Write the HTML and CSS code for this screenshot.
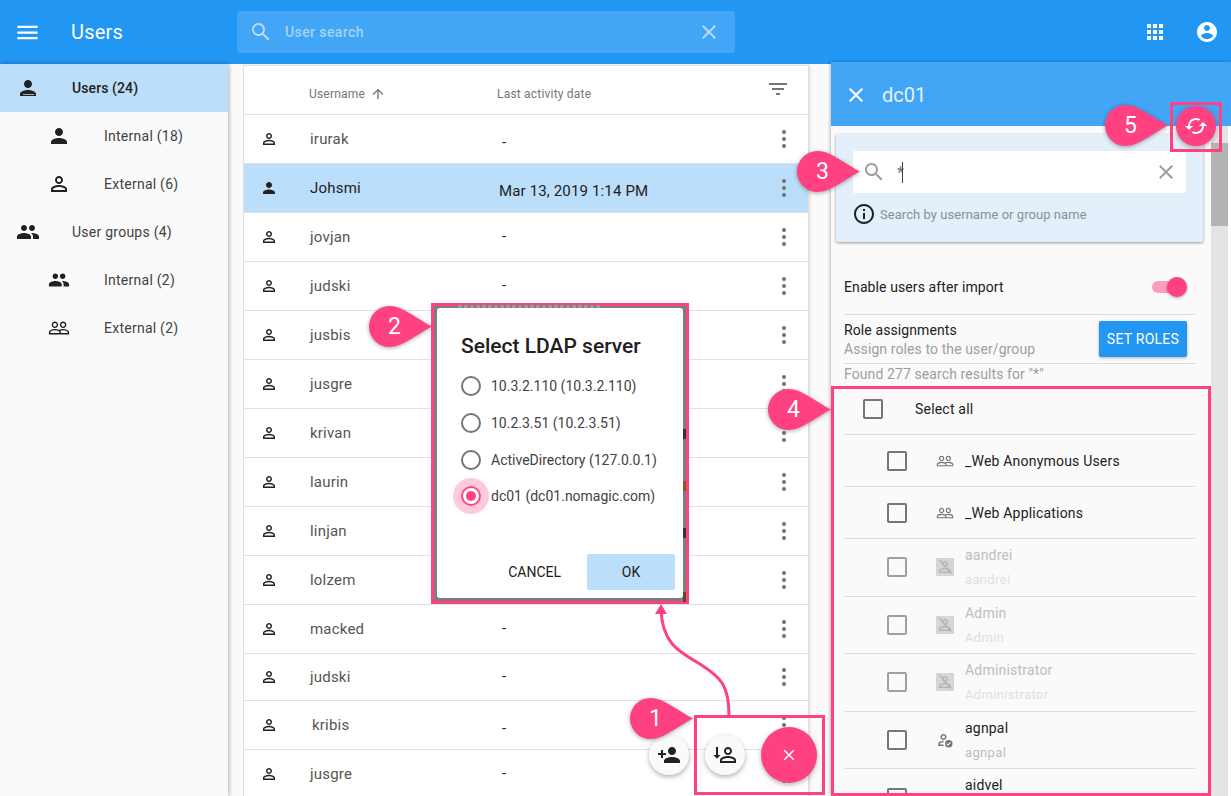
FILE: index.html
```html
<!DOCTYPE html>
<html lang="en">
  <head>
    <meta charset="UTF-8" />
    <title>Users</title>
    <link rel="stylesheet" href="styles.css">
  </head>
  <body>
    <svg class="sprite" xmlns="http://www.w3.org/2000/svg">
      <symbol id="i-menu" viewBox="0 0 24 24"><path d="M3 18h18v-2H3v2zm0-5h18v-2H3v2zm0-7v2h18V6H3z"/></symbol>
      <symbol id="i-search" viewBox="0 0 24 24"><path d="M15.5 14h-.79l-.28-.27C15.41 12.59 16 11.11 16 9.5 16 5.91 13.09 3 9.5 3S3 5.91 3 9.5 5.91 16 9.5 16c1.61 0 3.09-.59 4.23-1.57l.27.28v.79l5 4.99L20.49 19l-4.99-5zm-6 0C7.01 14 5 11.99 5 9.5S7.01 5 9.5 5 14 7.01 14 9.5 11.99 14 9.5 14z"/></symbol>
      <symbol id="i-close" viewBox="0 0 24 24"><path d="M19 6.41L17.59 5 12 10.59 6.41 5 5 6.41 10.59 12 5 17.59 6.41 19 12 13.41 17.59 19 19 17.59 13.41 12z"/></symbol>
      <symbol id="i-apps" viewBox="0 0 24 24"><path d="M4 8h4V4H4v4zm6 12h4v-4h-4v4zm-6 0h4v-4H4v4zm0-6h4v-4H4v4zm6 0h4v-4h-4v4zm6-10v4h4V4h-4zm-6 4h4V4h-4v4zm6 6h4v-4h-4v4zm0 6h4v-4h-4v4z"/></symbol>
      <symbol id="i-account" viewBox="0 0 24 24"><path d="M12 2C6.48 2 2 6.48 2 12s4.48 10 10 10 10-4.48 10-10S17.52 2 12 2zm0 3c1.66 0 3 1.34 3 3s-1.34 3-3 3-3-1.34-3-3 1.34-3 3-3zm0 14.2c-2.5 0-4.71-1.28-6-3.22.03-1.99 4-3.08 6-3.08 1.99 0 5.97 1.09 6 3.08-1.29 1.94-3.5 3.22-6 3.22z"/></symbol>
      <symbol id="i-person" viewBox="0 0 24 24"><path d="M12 12c2.21 0 4-1.79 4-4s-1.79-4-4-4-4 1.79-4 4 1.79 4 4 4zm0 2c-2.67 0-8 1.34-8 4v2h16v-2c0-2.66-5.33-4-8-4z"/></symbol>
      <symbol id="i-person-line" viewBox="0 0 24 24"><path d="M12 5.9c1.16 0 2.1.94 2.1 2.1s-.94 2.1-2.1 2.1S9.9 9.16 9.9 8s.94-2.1 2.1-2.1m0 9c2.97 0 6.1 1.46 6.1 2.1v1.1H5.9V17c0-.64 3.13-2.1 6.1-2.1M12 4C9.79 4 8 5.79 8 8s1.79 4 4 4 4-1.79 4-4-1.79-4-4-4zm0 9c-2.67 0-8 1.34-8 4v3h16v-3c0-2.66-5.33-4-8-4z"/></symbol>
      <symbol id="i-person-cut" viewBox="0 0 24 24"><path d="M12 12c2.21 0 4-1.79 4-4s-1.79-4-4-4-4 1.79-4 4 1.79 4 4 4zm0 2c-2.67 0-8 1.34-8 4v2h16v-2c0-2.66-5.33-4-8-4z"/><path fill="#bbdefb" d="M7 18h11v.8H7z"/></symbol>
      <symbol id="i-people" viewBox="0 0 24 24"><path d="M16 11c1.66 0 2.99-1.34 2.99-3S17.66 5 16 5c-1.66 0-3 1.34-3 3s1.34 3 3 3zm-8 0c1.66 0 2.99-1.34 2.99-3S9.66 5 8 5C6.34 5 5 6.34 5 8s1.34 3 3 3zm0 2c-2.33 0-7 1.17-7 3.5V19h14v-2.5c0-2.33-4.67-3.5-7-3.5zm8 0c-.29 0-.62.02-.97.05 1.16.84 1.97 1.97 1.97 3.45V19h6v-2.5c0-2.33-4.67-3.5-7-3.5z"/></symbol>
      <symbol id="i-people-line" viewBox="0 0 24 24"><path d="M16.5 13c-1.2 0-3.07.34-4.5 1-1.43-.67-3.3-1-4.5-1C5.33 13 1 14.08 1 16.25V19h22v-2.75c0-2.17-4.33-3.25-6.5-3.25zm-4 4.5h-10v-1.25c0-.54 2.56-1.75 5-1.75s5 1.21 5 1.75v1.25zm9 0H14v-1.25c0-.46-.2-.86-.52-1.22.88-.3 1.96-.53 3.02-.53 2.44 0 5 1.21 5 1.75v1.25zM7.5 12c1.93 0 3.5-1.57 3.5-3.5S9.43 5 7.5 5 4 6.57 4 8.5 5.57 12 7.5 12zm0-5.5c1.1 0 2 .9 2 2s-.9 2-2 2-2-.9-2-2 .9-2 2-2zm9 5.5c1.93 0 3.5-1.57 3.5-3.5S18.43 5 16.5 5 13 6.57 13 8.5s1.57 3.5 3.5 3.5zm0-5.5c1.1 0 2 .9 2 2s-.9 2-2 2-2-.9-2-2 .9-2 2-2z"/></symbol>
      <symbol id="i-arrow-up" viewBox="0 0 24 24"><path d="M4 12l1.41 1.41L11 7.83V20h2V7.83l5.58 5.59L20 12l-8-8-8 8z"/></symbol>
      <symbol id="i-filter" viewBox="0 0 24 24"><path d="M10 18h4v-2h-4v2zM3 6v2h18V6H3zm3 7h12v-2H6v2z"/></symbol>
      <symbol id="i-more" viewBox="0 0 24 24"><circle cx="12" cy="6" r="1.8"/><circle cx="12" cy="12" r="1.8"/><circle cx="12" cy="18" r="1.8"/></symbol>
      <symbol id="i-sync" viewBox="0 0 24 24"><path transform="rotate(90 12 12)" d="M12 4V1L8 5l4 4V6c3.31 0 6 2.69 6 6 0 1.01-.25 1.97-.7 2.8l1.46 1.46C19.54 15.03 20 13.57 20 12c0-4.42-3.58-8-8-8zm0 14c-3.31 0-6-2.69-6-6 0-1.01.25-1.97.7-2.8L5.24 7.74C4.46 8.97 4 10.43 4 12c0 4.42 3.58 8 8 8v3l4-4-4-4v3z"/></symbol>
      <symbol id="i-info" viewBox="0 0 24 24"><path d="M11 7h2v2h-2zm0 4h2v6h-2zm1-9C6.48 2 2 6.48 2 12s4.48 10 10 10 10-4.48 10-10S17.52 2 12 2zm0 18c-4.41 0-8-3.59-8-8s3.59-8 8-8 8 3.59 8 8-3.59 8-8 8z"/></symbol>
      <symbol id="i-person-add" viewBox="0 0 24 24"><path d="M15 12c2.21 0 4-1.79 4-4s-1.79-4-4-4-4 1.79-4 4 1.79 4 4 4zm-9-2V7H4v3H1v2h3v3h2v-3h3v-2H6zm9 4c-2.67 0-8 1.34-8 4v2h16v-2c0-2.66-5.33-4-8-4z"/></symbol>
      <symbol id="i-person-import" viewBox="0 0 24 24"><path d="M15 5.9c1.16 0 2.1.94 2.1 2.1s-.94 2.1-2.1 2.1-2.1-.94-2.1-2.1.94-2.1 2.1-2.1m0 9c2.97 0 6.1 1.46 6.1 2.1v1.1H8.9V17c0-.64 3.13-2.1 6.1-2.1M15 4c-2.21 0-4 1.79-4 4s1.79 4 4 4 4-1.79 4-4-1.79-4-4-4zm0 9c-2.67 0-8 1.34-8 4v3h16v-3c0-2.66-5.33-4-8-4z"/><path d="M3 4h2v8h2.5L4 15.8.5 12H3z"/></symbol>
      <symbol id="i-person-off" viewBox="0 0 24 24"><path d="M12 5.9c1.16 0 2.1.94 2.1 2.1s-.94 2.1-2.1 2.1S9.9 9.16 9.9 8s.94-2.1 2.1-2.1m0 9c2.97 0 6.1 1.46 6.1 2.1v1.1H5.9V17c0-.64 3.13-2.1 6.1-2.1M12 4C9.79 4 8 5.79 8 8s1.79 4 4 4 4-1.79 4-4-1.79-4-4-4zm0 9c-2.67 0-8 1.34-8 4v3h16v-3c0-2.66-5.33-4-8-4z"/><path d="M3.6 3.1l1.5-1.5 16 18.3-1.5 1.5z"/></symbol>
      <symbol id="i-person-ok" viewBox="0 0 24 24"><path d="M10 5.9c1.16 0 2.1.94 2.1 2.1s-.94 2.1-2.1 2.1S7.9 9.16 7.9 8s.94-2.1 2.1-2.1M10 4C7.79 4 6 5.79 6 8s1.79 4 4 4 4-1.79 4-4-1.79-4-4-4zm0 9c-2.67 0-7 1.34-7 4v3h7v-1.9H4.9V17c0-.64 2.6-2.1 5.1-2.1z"/><path d="M17 12a5 5 0 1 0 0 10 5 5 0 0 0 0-10zm-1 7.6l-2.4-2.4 1-1 1.4 1.4 3-3 1 1z"/></symbol>
      <symbol id="drop" viewBox="0 0 63 41"><path d="M20.5 0C33 0 45 11 63 20.5 45 30 33 41 20.5 41a20.5 20.5 0 0 1 0-41z"/></symbol>
    </svg>

    <header class="app-bar">
      <svg class="icon menu-icon"><use href="#i-menu"/></svg>
      <h1 class="app-title">Users</h1>
      <div class="app-search">
        <svg class="icon app-search-icon"><use href="#i-search"/></svg>
        <span class="app-search-text">User search</span>
        <svg class="icon app-search-clear"><use href="#i-close"/></svg>
      </div>
      <svg class="icon app-action apps-icon"><use href="#i-apps"/></svg>
      <svg class="icon app-action account-icon"><use href="#i-account"/></svg>
    </header>

    <div class="layout">
      <nav class="sidebar">
        <div class="nav-item selected"><span class="nav-icon"><svg class="icon s24"><use href="#i-person-cut"/></svg></span>Users (24)</div>
        <div class="nav-item nested"><span class="nav-icon"><svg class="icon s24"><use href="#i-person"/></svg></span>Internal (18)</div>
        <div class="nav-item nested"><span class="nav-icon"><svg class="icon s24"><use href="#i-person-line"/></svg></span>External (6)</div>
        <div class="nav-item"><span class="nav-icon"><svg class="icon s24"><use href="#i-people"/></svg></span>User groups (4)</div>
        <div class="nav-item nested"><span class="nav-icon"><svg class="icon s22"><use href="#i-people"/></svg></span>Internal (2)</div>
        <div class="nav-item nested"><span class="nav-icon"><svg class="icon s22"><use href="#i-people-line"/></svg></span>External (2)</div>
      </nav>

      <main class="content">
        <div class="table">
          <div class="table-head">
            <span class="col-name">Username <svg class="icon sort-icon"><use href="#i-arrow-up"/></svg></span>
            <span class="col-date">Last activity date</span>
            <svg class="icon filter-icon"><use href="#i-filter"/></svg>
          </div>
          <div class="row"><svg class="icon user-icon"><use href="#i-person-line"/></svg><span class="name">irurak</span><span class="date dash low">-</span><svg class="icon more"><use href="#i-more"/></svg></div>
          <div class="row selected"><svg class="icon user-icon"><use href="#i-person"/></svg><span class="name">Johsmi</span><span class="date low">Mar 13, 2019 1:14 PM</span><svg class="icon more"><use href="#i-more"/></svg></div>
          <div class="row"><svg class="icon user-icon"><use href="#i-person-line"/></svg><span class="name">jovjan</span><span class="date dash">-</span><svg class="icon more"><use href="#i-more"/></svg></div>
          <div class="row"><svg class="icon user-icon"><use href="#i-person-line"/></svg><span class="name">judski</span><span class="date dash">-</span><svg class="icon more"><use href="#i-more"/></svg></div>
          <div class="row"><svg class="icon user-icon"><use href="#i-person-line"/></svg><span class="name">jusbis</span><span class="date"></span><svg class="icon more"><use href="#i-more"/></svg></div>
          <div class="row"><svg class="icon user-icon"><use href="#i-person-line"/></svg><span class="name">jusgre</span><span class="date"></span><svg class="icon more"><use href="#i-more"/></svg></div>
          <div class="row"><svg class="icon user-icon"><use href="#i-person-line"/></svg><span class="name">krivan</span><span class="date"></span><svg class="icon more"><use href="#i-more"/></svg></div>
          <div class="row"><svg class="icon user-icon"><use href="#i-person-line"/></svg><span class="name">laurin</span><span class="date"></span><svg class="icon more"><use href="#i-more"/></svg></div>
          <div class="row"><svg class="icon user-icon"><use href="#i-person-line"/></svg><span class="name">linjan</span><span class="date"></span><svg class="icon more"><use href="#i-more"/></svg></div>
          <div class="row"><svg class="icon user-icon"><use href="#i-person-line"/></svg><span class="name">lolzem</span><span class="date"></span><svg class="icon more"><use href="#i-more"/></svg></div>
          <div class="row"><svg class="icon user-icon"><use href="#i-person-line"/></svg><span class="name">macked</span><span class="date dash">-</span><svg class="icon more"><use href="#i-more"/></svg></div>
          <div class="row short"><svg class="icon user-icon"><use href="#i-person-line"/></svg><span class="name">judski</span><span class="date dash">-</span><svg class="icon more"><use href="#i-more"/></svg></div>
          <div class="row"><svg class="icon user-icon"><use href="#i-person-line"/></svg><span class="name shifted">kribis</span><span class="date dash low">-</span><svg class="icon more"><use href="#i-more"/></svg></div>
          <div class="row"><svg class="icon user-icon"><use href="#i-person-line"/></svg><span class="name">jusgre</span><span class="date dash">-</span><svg class="icon more"><use href="#i-more"/></svg></div>
        </div>
      </main>

      <aside class="panel">
        <div class="panel-header">
          <svg class="icon panel-close"><use href="#i-close"/></svg>
          <span class="panel-title">dc01</span>
        </div>
        <div class="panel-body">
          <div class="panel-main">
            <div class="search-card">
              <div class="search-input">
                <svg class="icon search-icon"><use href="#i-search"/></svg>
                <span class="search-value">*</span>
                <span class="caret"></span>
                <svg class="icon search-clear"><use href="#i-close"/></svg>
              </div>
              <div class="search-hint">
                <svg class="icon s24"><use href="#i-info"/></svg>
                <span>Search by username or group name</span>
              </div>
            </div>

            <div class="settings">
              <div class="setting-row enable-row">
                <span>Enable users after import</span>
                <span class="toggle"><span class="toggle-thumb"></span></span>
              </div>
              <div class="setting-row role-row">
                <div class="role-text">
                  <div>Role assignments</div>
                  <div class="muted">Assign roles to the user/group</div>
                </div>
                <button class="set-roles">SET ROLES</button>
              </div>
              <div class="found muted">Found 277 search results for "*"</div>
            </div>

            <div class="results">
              <div class="result select-all"><span class="checkbox"></span><span class="select-all-label">Select all</span></div>
              <div class="result group">
                <span class="checkbox"></span>
                <span class="result-icon"><svg class="icon s18 icon-grey"><use href="#i-people-line"/></svg></span>
                <span class="result-name">_Web Anonymous Users</span>
              </div>
              <div class="result group">
                <span class="checkbox"></span>
                <span class="result-icon"><svg class="icon s18 icon-grey"><use href="#i-people-line"/></svg></span>
                <span class="result-name">_Web Applications</span>
              </div>
              <div class="result user disabled">
                <span class="checkbox"></span>
                <span class="result-icon boxed"><svg class="icon s18"><use href="#i-person-off"/></svg></span>
                <div class="result-text"><div class="result-name">aandrei</div><div class="result-sub">aandrei</div></div>
              </div>
              <div class="result user disabled">
                <span class="checkbox"></span>
                <span class="result-icon boxed"><svg class="icon s18"><use href="#i-person-off"/></svg></span>
                <div class="result-text"><div class="result-name">Admin</div><div class="result-sub">Admin</div></div>
              </div>
              <div class="result user disabled">
                <span class="checkbox"></span>
                <span class="result-icon boxed"><svg class="icon s18"><use href="#i-person-off"/></svg></span>
                <div class="result-text"><div class="result-name">Administrator</div><div class="result-sub">Administrator</div></div>
              </div>
              <div class="result user">
                <span class="checkbox"></span>
                <span class="result-icon"><svg class="icon s18 icon-grey"><use href="#i-person-ok"/></svg></span>
                <div class="result-text"><div class="result-name">agnpal</div><div class="result-sub">agnpal</div></div>
              </div>
              <div class="result user">
                <span class="checkbox"></span>
                <span class="result-icon"></span>
                <div class="result-text"><div class="result-name">aidvel</div></div>
              </div>
            </div>
          </div>
          <div class="scrollbar">
            <span class="scroll-thumb"></span>
          </div>
        </div>
      </aside>
    </div>

    <!-- dialog, shown inside its highlight frame -->
    <div class="frame frame-dialog">
      <span class="ghost-text"></span>
      <span class="peek peek-1"></span>
      <span class="peek peek-2"></span>
      <span class="peek peek-3"></span>
      <span class="peek peek-4"></span>
      <div class="dialog">
        <h2 class="dialog-title">Select LDAP server</h2>
        <div class="radio-row"><span class="radio"></span>10.3.2.110 (10.3.2.110)</div>
        <div class="radio-row"><span class="radio"></span>10.2.3.51 (10.2.3.51)</div>
        <div class="radio-row"><span class="radio"></span>ActiveDirectory (127.0.0.1)</div>
        <div class="radio-row"><span class="radio checked"></span>dc01 (dc01.nomagic.com)</div>
        <div class="dialog-actions">
          <button class="btn-cancel">CANCEL</button>
          <button class="btn-ok">OK</button>
        </div>
      </div>
    </div>

    <!-- floating buttons -->
    <button class="fab fab-small fab-add"><svg class="icon s24"><use href="#i-person-add"/></svg></button>
    <button class="fab fab-small fab-import"><svg class="icon s24"><use href="#i-person-import"/></svg></button>
    <button class="fab fab-main"><svg class="icon s18"><use href="#i-close"/></svg></button>
    <button class="fab fab-sync"><svg class="icon s24"><use href="#i-sync"/></svg></button>

    <!-- annotations on top of the screenshot -->
    <div class="frame frame-fab"></div>
    <div class="frame frame-list"></div>
    <div class="frame frame-sync"></div>

    <svg class="arrow" viewBox="0 0 100 120">
      <path d="M79 112C79 82 72 74 50 60 27 47 12 38 11 5" fill="none" stroke="#ff4081" stroke-width="3"/>
      <path d="M11 0l6 10H5z" fill="#ff4081"/>
    </svg>

    <div class="callout callout-1"><svg viewBox="0 0 63 41"><use href="#drop"/></svg><span>1</span></div>
    <div class="callout callout-2"><svg viewBox="0 0 63 41"><use href="#drop"/></svg><span>2</span></div>
    <div class="callout callout-3"><svg viewBox="0 0 63 41"><use href="#drop"/></svg><span>3</span></div>
    <div class="callout callout-4"><svg viewBox="0 0 63 41"><use href="#drop"/></svg><span>4</span></div>
    <div class="callout callout-5"><svg viewBox="0 0 63 41"><use href="#drop"/></svg><span>5</span></div>
  </body>
</html>
```

FILE: styles.css
```css
* {
  box-sizing: border-box;
}
html,
body {
  margin: 0;
  height: 796px;
  overflow: hidden;
}
body {
  position: relative;
  font-family: Roboto, "Liberation Sans", sans-serif;
  font-size: 14px;
  color: #212121;
  background: #fafafa;
}
button {
  font-family: inherit;
  border: none;
  cursor: pointer;
}
.sprite {
  position: absolute;
  width: 0;
  height: 0;
}
.icon {
  display: block;
  flex: none;
  width: 24px;
  height: 24px;
  fill: currentColor;
}
.s24 {
  width: 24px;
  height: 24px;
}
.s22 {
  width: 22px;
  height: 22px;
}
.s18 {
  width: 18px;
  height: 18px;
}
.icon-grey {
  color: #757575;
}

/* app bar */
.app-bar {
  display: flex;
  align-items: center;
  height: 64px;
  background: #2196f3;
  color: #fff;
  padding-left: 14px;
}
.menu-icon {
  width: 27px;
  height: 27px;
}
.app-title {
  margin: 0 0 0 30px;
  width: 166px;
  font-size: 20px;
  font-weight: 400;
  letter-spacing: 0.2px;
}
.app-search {
  display: flex;
  align-items: center;
  width: 498px;
  height: 42px;
  padding: 0 14px 0 12px;
  background: #42a5f5;
  border-radius: 3px;
  color: #b5dcfb;
}
.app-search-text {
  flex: 1;
  margin-left: 12px;
  font-size: 14px;
  font-weight: 500;
  letter-spacing: 0.4px;
  color: #a5d4fa;
}
.apps-icon {
  margin-left: 408px;
}
.account-icon {
  margin-left: 28px;
}

/* main layout */
.layout {
  display: flex;
  height: 732px;
}
.sidebar {
  width: 228px;
  flex: none;
  background: #fafafa;
  box-shadow: 1px 0 4px rgba(0, 0, 0, 0.3);
  letter-spacing: 0.25px;
}
.nav-item {
  display: flex;
  align-items: center;
  height: 48px;
  color: #424242;
}
.nav-item.selected {
  background: #bbdefb;
  color: #212121;
  font-weight: 500;
  letter-spacing: 0.1px;
}
.nav-icon {
  display: flex;
  justify-content: center;
  width: 56px;
  margin-right: 16px;
  color: #212121;
}
.nav-item.nested {
  padding-left: 31px;
  padding-right: 0;
}
.nav-item.nested .nav-icon {
  margin-right: 17px;
}

/* users table */
.content {
  width: 603px;
  flex: none;
  padding: 1px 22px 0 15px;
}
.table {
  background: #fff;
  border: 1px solid #e0e0e0;
  border-bottom: none;
  box-shadow: 1px 0 2px rgba(0, 0, 0, 0.12);
}
.table-head {
  display: flex;
  align-items: center;
  height: 49px;
  padding-top: 7px;
  padding-left: 65px;
  border-bottom: 1px solid #e0e0e0;
  font-size: 12px;
  letter-spacing: 0.2px;
  color: #757575;
}
.col-name {
  display: flex;
  align-items: center;
  gap: 5px;
  width: 188px;
}
.col-date {
  flex: 1;
}
.sort-icon {
  width: 16px;
  height: 16px;
}
.filter-icon {
  margin-right: 18px;
  margin-top: -9px;
}
.row {
  display: flex;
  align-items: center;
  height: 49px;
  padding-left: 16px;
  border-bottom: 1px solid #e0e0e0;
  color: #555;
}
.row.short {
  height: 47px;
}
.row.selected {
  background: #bbdefb;
  color: #212121;
}
.user-icon {
  width: 18px;
  height: 18px;
  color: #212121;
}
.name {
  width: 189px;
  margin-left: 32px;
  font-size: 15px;
  letter-spacing: 0.2px;
}
.name.shifted {
  text-indent: 2px;
}
.date {
  flex: 1;
  font-size: 15px;
  letter-spacing: 0.15px;
  color: #212121;
}
.date.dash {
  padding-left: 3px;
  padding-bottom: 3px;
}
.date.low {
  padding-top: 5px;
  padding-bottom: 0;
}
.more {
  width: 28px;
  height: 28px;
  margin-right: 10px;
  color: #757575;
}

/* import panel */
.panel {
  width: 400px;
  flex: none;
  margin-top: -2px;
  margin-left: 0;
  background: #fff;
  box-shadow: -1px 0 3px rgba(0, 0, 0, 0.25);
}
.panel-header {
  display: flex;
  align-items: center;
  height: 64px;
  padding: 2px 0 0 16px;
  background: #42a5f5;
  color: #fff;
}
.panel-close {
  margin-left: -3px;
}
.panel-title {
  margin-left: 14px;
  font-size: 20px;
  color: #e3f2fd;
}
.panel-body {
  display: flex;
  height: 670px;
}
.panel-main {
  width: 380px;
  flex: none;
  overflow: hidden;
  background: #fafafa;
  letter-spacing: 0.1px;
}
.scrollbar {
  width: 17px;
  background: #e4e4e4;
  padding-top: 17px;
}
.scroll-thumb {
  display: block;
  height: 83px;
  background: #b4b4b4;
}
.search-card {
  height: 108px;
  margin: 8px 8px 0 5px;
  padding: 17px 17px 0;
  background: #e3effa;
  border-radius: 2px;
  box-shadow: 0 1px 3px rgba(0, 0, 0, 0.4);
}
.search-input {
  display: flex;
  align-items: center;
  height: 42px;
  padding: 0 8px 0 9px;
  background: #fff;
  border-radius: 2px;
  color: #9e9e9e;
}
.search-value {
  margin-left: 11px;
  color: #757575;
  font-size: 16px;
}
.caret {
  width: 1px;
  height: 21px;
  margin-left: -2px;
  background: #424242;
}
.search-clear {
  margin-left: auto;
}
.search-hint {
  display: flex;
  align-items: center;
  gap: 4px;
  margin: 9px 0 0 -1px;
  color: #212121;
}
.search-hint span {
  font-size: 13px;
  letter-spacing: 0.05px;
  color: #8a9096;
}
.settings {
  margin: 18px 16px 0 13px;
}
.setting-row {
  display: flex;
  align-items: center;
  justify-content: space-between;
  border-bottom: 1px solid #dcdcdc;
}
.enable-row {
  height: 55px;
}
.toggle {
  display: flex;
  justify-content: flex-end;
  align-items: center;
  width: 33px;
  height: 12px;
  margin-right: 10px;
  background: #ff9ebb;
  border-radius: 6px;
}
.toggle-thumb {
  flex: none;
  width: 20px;
  height: 20px;
  margin-right: -2px;
  border-radius: 50%;
  background: #ff4081;
  box-shadow: 0 1px 3px rgba(0, 0, 0, 0.35);
}
.role-row {
  height: 49px;
}
.role-text {
  padding-top: 2px;
  line-height: 19px;
}
.muted {
  color: #9e9e9e;
}
.set-roles {
  width: 88px;
  height: 36px;
  margin-right: 8px;
  background: #2196f3;
  color: #fff;
  font-size: 14px;
  letter-spacing: 0.25px;
  border-radius: 2px;
  box-shadow: 0 1px 3px rgba(0, 0, 0, 0.3);
}
.found {
  height: 23px;
  line-height: 21px;
}
.results {
  margin: 0 16px 0 13px;
  letter-spacing: 0.2px;
}
.result {
  display: flex;
  align-items: center;
  border-bottom: 1px solid #dcdcdc;
}
.select-all {
  height: 49px;
  padding-left: 19px;
  padding-bottom: 2px;
  margin-top: -1px;
}
.select-all-label {
  margin-left: 32px;
}
.checkbox {
  flex: none;
  width: 20px;
  height: 20px;
  border: 2px solid #757575;
  border-radius: 2px;
}
.result.group {
  height: 52px;
  padding-left: 43px;
}
.result.user {
  height: 57.6px;
  padding-left: 43px;
}
.result-icon {
  display: flex;
  flex: none;
  width: 18px;
  height: 18px;
  margin-left: 29px;
  margin-right: 11px;
}
.result-icon.boxed {
  background: #d6d6d6;
  color: #b5b5b5;
}
.result-text {
  align-self: flex-start;
  padding-top: 4px;
  line-height: 24px;
}
.result-sub {
  padding-top: 1px;
  font-size: 13px;
  letter-spacing: 0.35px;
  color: #bdbdbd;
}
.result.disabled .checkbox {
  border-color: #a0a0a0;
}
.result.disabled .result-name {
  color: #bdbdbd;
}
.result.disabled .result-sub {
  color: #e0e0e0;
}

/* highlight frames */
.frame {
  position: absolute;
  border: 3px solid #ff4081;
}
.frame-dialog {
  left: 431px;
  top: 303px;
  width: 258px;
  height: 301px;
  padding: 2px 3px;
  background: #7d7d7d;
}
.frame-fab {
  left: 694px;
  top: 715px;
  width: 131px;
  height: 80px;
}
.frame-list {
  left: 831px;
  top: 386px;
  width: 380px;
  height: 410px;
}
.frame-sync {
  left: 1170px;
  top: 102px;
  width: 52px;
  height: 50px;
}
.ghost-text {
  position: absolute;
  left: 24px;
  top: -1px;
  width: 142px;
  height: 3px;
  background: repeating-linear-gradient(90deg, #9a9a9a 0 4px, #7d7d7d 4px 6px);
}
.peek {
  position: absolute;
  right: 0;
  width: 3px;
  height: 10px;
  background: #333;
}
.peek-1 {
  top: 123px;
}
.peek-2 {
  top: 175px;
  background: #8a5a20;
}
.peek-3 {
  top: 222px;
}
.peek-4 {
  top: 286px;
  background: #5a4a20;
}

/* dialog */
.dialog {
  display: flex;
  flex-direction: column;
  height: 290px;
  padding: 24px 8px 8px 24px;
  background: #fff;
  border-radius: 3px;
}
.dialog-title {
  margin: 0 0 8px;
  font-size: 21px;
  font-weight: 500;
  line-height: 28px;
}
.radio-row {
  display: flex;
  align-items: center;
  height: 36.7px;
  gap: 10px;
  color: #424242;
}
.radio {
  position: relative;
  display: block;
  flex: none;
  width: 20px;
  height: 20px;
  border: 2px solid #757575;
  border-radius: 50%;
}
.radio.checked {
  border-color: #ff4081;
  box-shadow: 0 0 0 8px rgba(255, 64, 129, 0.28);
}
.radio.checked::after {
  content: "";
  position: absolute;
  left: 3px;
  top: 3px;
  width: 10px;
  height: 10px;
  background: #ff4081;
  border-radius: 50%;
}
.dialog-actions {
  display: flex;
  align-items: center;
  justify-content: flex-end;
  margin-top: auto;
  gap: 26px;
}
.btn-cancel {
  padding: 0;
  background: none;
  color: #212121;
  font-size: 14px;
}
.btn-ok {
  width: 88px;
  height: 36px;
  background: #bbdefb;
  color: #212121;
  font-size: 14px;
  border-radius: 2px;
}

/* floating buttons */
.fab {
  position: absolute;
  display: flex;
  align-items: center;
  justify-content: center;
  padding: 0;
  border-radius: 50%;
  box-shadow: 0 2px 5px rgba(0, 0, 0, 0.3);
}
.fab-small {
  top: 735px;
  width: 40px;
  height: 40px;
  background: #fafafa;
  color: #212121;
}
.fab-add {
  left: 649px;
}
.fab-import {
  left: 705px;
}
.fab-main {
  left: 761px;
  top: 727px;
  width: 56px;
  height: 56px;
  background: #ff4081;
  color: #fff;
}
.fab-sync {
  left: 1176px;
  top: 106px;
  width: 40px;
  height: 40px;
  background: #ff4081;
  color: #fff;
}

/* annotations */
.arrow {
  position: absolute;
  left: 650px;
  top: 604px;
  width: 100px;
  height: 120px;
}
.callout {
  position: absolute;
  display: flex;
  align-items: center;
  width: 63px;
  height: 41px;
  padding-left: 5px;
  color: #fff;
  font-size: 23px;
}
.callout svg {
  position: absolute;
  left: 0;
  top: 0;
  width: 63px;
  height: 41px;
  fill: #ff4081;
  filter: drop-shadow(0 1px 2px rgba(0, 0, 0, 0.35));
}
.callout span {
  position: relative;
  width: 41px;
  text-align: center;
}
.callout-1 {
  left: 630px;
  top: 698px;
}
.callout-2 {
  left: 369px;
  top: 306px;
}
.callout-3 {
  left: 797px;
  top: 151px;
}
.callout-4 {
  left: 768px;
  top: 389px;
}
.callout-5 {
  left: 1105px;
  top: 105px;
}
```
